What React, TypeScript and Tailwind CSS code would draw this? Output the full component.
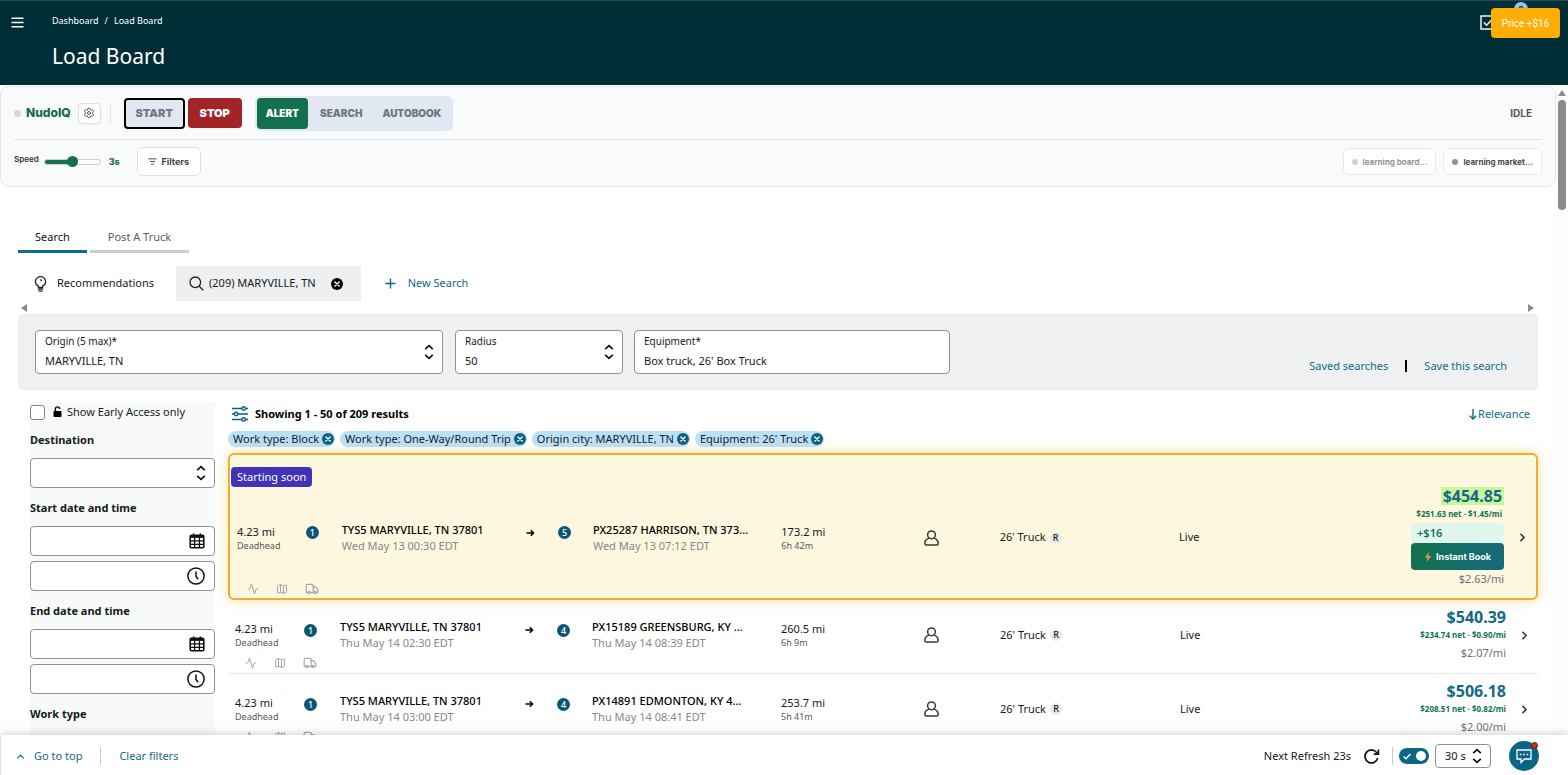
import type { ReactNode } from 'react';
import { Activity, ChevronRight, ChevronUp, ListFilter, Map as MapIcon, Settings, Truck } from 'lucide-react';

type Load = {
  id: string;
  fromStops: number;
  from: string;
  fromTime: string;
  toStops: number;
  to: string;
  toTime: string;
  miles: string;
  duration: string;
  price: string;
  net: string;
  rate: string;
  bump?: string;
};

const loads: Load[] = [
  { id: 'a', fromStops: 1, from: 'TYS5 MARYVILLE, TN 37801', fromTime: 'Wed May 13 00:30 EDT', toStops: 5, to: 'PX25287 HARRISON, TN 373…', toTime: 'Wed May 13 07:12 EDT', miles: '173.2 mi', duration: '6h 42m', price: '$454.85', net: '$251.63 net · $1.45/mi', rate: '$2.63/mi', bump: '+$16' },
  { id: 'b', fromStops: 1, from: 'TYS5 MARYVILLE, TN 37801', fromTime: 'Thu May 14 02:30 EDT', toStops: 4, to: 'PX15189 GREENSBURG, KY …', toTime: 'Thu May 14 08:39 EDT', miles: '260.5 mi', duration: '6h 9m', price: '$540.39', net: '$234.74 net · $0.90/mi', rate: '$2.07/mi' },
  { id: 'c', fromStops: 1, from: 'TYS5 MARYVILLE, TN 37801', fromTime: 'Thu May 14 03:00 EDT', toStops: 4, to: 'PX14891 EDMONTON, KY 4…', toTime: 'Thu May 14 08:41 EDT', miles: '253.7 mi', duration: '5h 41m', price: '$506.18', net: '$208.51 net · $0.82/mi', rate: '$2.00/mi' },
];

const filterChips = ['Work type: Block', 'Work type: One-Way/Round Trip', 'Origin city: MARYVILLE, TN', "Equipment: 26' Truck"];

function UpDown() {
  return (
    <svg className="pointer-events-none shrink-0" width="10" height="16" viewBox="0 0 10 16" fill="none" stroke="#111" strokeWidth="1.7" aria-hidden="true">
      <path d="M1.2 5.2 5 1.6l3.8 3.6M1.2 10.8 5 14.4l3.8-3.6" />
    </svg>
  );
}

function CloseDot({ size, color }: { size: number; color: string }) {
  return (
    <svg width={size} height={size} viewBox="0 0 12 12" aria-hidden="true">
      <circle cx="6" cy="6" r="6" fill={color} />
      <path d="m3.9 3.9 4.2 4.2M8.1 3.9 3.9 8.1" stroke="#fff" strokeWidth="1.4" strokeLinecap="round" />
    </svg>
  );
}

function CalendarIcon() {
  return (
    <svg width="16" height="16" viewBox="0 0 16 16" fill="none" stroke="#111" aria-hidden="true">
      <rect x="1.2" y="2.4" width="13.6" height="12.4" rx="1.2" strokeWidth="1.6" />
      <path d="M1 3.6h14" strokeWidth="2.6" />
      <path d="M1 7.8h14M1 11.4h14M5.6 5v9.6M10.4 5v9.6" strokeWidth="1.3" />
      <path d="M4.6.4v3M11.4.4v3" strokeWidth="1.5" />
    </svg>
  );
}

function ClockIcon() {
  return (
    <svg width="18" height="18" viewBox="0 0 18 18" fill="none" stroke="#111" strokeWidth="1.5" aria-hidden="true">
      <circle cx="9" cy="9" r="8.1" />
      <path d="M9 4.4v5l2.2 2.9" />
    </svg>
  );
}

function PersonIcon() {
  return (
    <svg width="15" height="16" viewBox="0 0 15 16" fill="none" stroke="#3a3a36" strokeWidth="1.5" aria-hidden="true">
      <circle cx="7.5" cy="4.8" r="3.9" />
      <path d="M4.9 8.1C2.3 9 .8 11 .8 13.6c0 1 .6 1.5 1.6 1.5h10.2c1 0 1.6-.5 1.6-1.5 0-2.6-1.5-4.6-4.1-5.5" />
    </svg>
  );
}

function StopBadge({ count }: { count: number }) {
  return (
    <span className="flex size-[13px] items-center justify-center rounded-full bg-[#0b5672] text-[9px] leading-none font-medium text-white">
      {count}
    </span>
  );
}

function ComboField({ id, label, value, className }: { id: string; label: string; value: string; className: string }) {
  return (
    <div className={`flex h-11 items-center rounded-sm border border-[#8d9296] bg-white pr-2 pl-[9px] ${className}`}>
      <div className="flex min-w-0 flex-1 flex-col pb-[3px]">
        <label htmlFor={id} className="text-[10px] leading-5">{label}</label>
        <select id={id} className="h-5 w-full appearance-none bg-transparent text-[11px] leading-5 outline-none">
          <option>{value}</option>
        </select>
      </div>
      <UpDown />
    </div>
  );
}

function SideInput({ label, icon }: { label: string; icon: ReactNode }) {
  return (
    <div className="flex h-[30px] items-center rounded-sm border border-[#8d9296] bg-white pr-[9px] pl-2">
      <input aria-label={label} className="min-w-0 flex-1 bg-transparent text-[11px] outline-none" />
      {icon}
    </div>
  );
}

function LoadRow({ load }: { load: Load }) {
  const hot = Boolean(load.bump);
  return (
    <li
      className={
        hot
          ? 'relative rounded-md border-2 border-[#ebb12c] bg-[#fdf7df] pt-3 pb-[3px] shadow-[0_0_12px_rgba(250,176,30,0.45)]'
          : 'border-b border-[#e8eaeb] pt-2 pb-1'
      }
    >
      {hot && (
        <span className="ml-px flex h-5 w-fit items-center rounded-sm bg-[#4133b7] px-[6px] text-[11px] text-white">Starting soon</span>
      )}
      <div className="grid grid-cols-[minmax(0,69fr)_minmax(0,36fr)_minmax(0,185fr)_minmax(0,32fr)_minmax(0,35fr)_minmax(0,189fr)_minmax(0,143fr)_minmax(0,76fr)_minmax(0,180fr)_minmax(0,326fr)_minmax(0,25fr)] items-center pr-[7px] pl-[7px]">
        <div>
          <p className="text-[11px] leading-4">4.23 mi</p>
          <p className="text-[9px] leading-3 text-[#55595c]">Deadhead</p>
        </div>
        <div className="pb-[10px]"><StopBadge count={load.fromStops} /></div>
        <div>
          <p className="truncate text-[11px] leading-4 font-medium text-black">{load.from}</p>
          <p className="truncate text-[11px] leading-4 text-[#85888b]">{load.fromTime}</p>
        </div>
        <svg className="mb-[10px]" width="9" height="8" viewBox="0 0 9 8" fill="none" stroke="#000" strokeWidth="1.5" aria-hidden="true">
          <path d="M.5 4h7M4.8 1.2 7.6 4 4.8 6.8" />
        </svg>
        <div className="pb-[10px]"><StopBadge count={load.toStops} /></div>
        <div>
          <p className="truncate text-[11px] leading-4 font-medium text-black">{load.to}</p>
          <p className="truncate text-[11px] leading-4 text-[#85888b]">{load.toTime}</p>
        </div>
        <div>
          <p className="text-[11px] leading-4">{load.miles}</p>
          <p className="text-[9px] leading-3 text-[#55595c]">{load.duration}</p>
        </div>
        <PersonIcon />
        <div className="flex items-center gap-1 text-[11px]">
          26' Truck
          <span className="flex size-3 items-center justify-center rounded-full bg-[#e7e9ea] text-[9px] font-medium">R</span>
        </div>
        <div className="flex items-center justify-between">
          <span className="text-[11px]">Live</span>
          <div className="flex flex-col items-end">
            <span className={`h-[18px] text-[16px] leading-[18px] font-bold text-[#116a85] ${hot ? 'bg-[#c9f59c] px-[2px]' : ''}`}>{load.price}</span>
            <span className={`text-[8px] leading-[18px] font-bold text-[#12724f] ${hot ? 'pr-[2px]' : ''}`}>{load.net}</span>
            {hot && (
              <div className="flex w-[93px] flex-col">
                <span className="h-5 rounded-t-sm bg-[#e1f6ed] pl-[6px] text-[11px] leading-5 font-semibold text-[#12724f]">{load.bump}</span>
                <button type="button" className="flex h-[27px] items-center justify-center gap-1 rounded bg-linear-to-r from-[#13704f] to-[#176a7d] font-[Inter,sans-serif] text-[9px] font-bold text-white">
                  <svg width="8" height="10" viewBox="0 0 8 10" aria-hidden="true">
                    <path d="M5 0 1 5.6h2.4L2.6 10 7.2 4.2H4.4z" fill="#f59a3c" />
                  </svg>
                  Instant Book
                </button>
              </div>
            )}
            <span className="text-[11px] leading-[18px] text-[#6c7073]">{load.rate}</span>
          </div>
        </div>
        <button type="button" aria-label="Load details" className="flex justify-end">
          <ChevronRight size={13} strokeWidth={3} color="#333" />
        </button>
      </div>
      <div className="-mt-[5px] flex h-3 items-center gap-[17px] pl-[17px] text-[#a3a6a6]">
        <Activity size={12} />
        <MapIcon size={12} />
        <Truck size={14} />
      </div>
    </li>
  );
}

function Header() {
  return (
    <header className="relative flex h-[85px] shrink-0 items-start border-t border-[#2d4c52] bg-[#002e36] text-white">
      <button type="button" aria-label="Menu" className="mt-4 ml-[11px]">
        <svg width="13" height="11" viewBox="0 0 13 11" stroke="#fff" strokeWidth="1.5" aria-hidden="true">
          <path d="M.5 1.2h12M.5 5.4h12M.5 9.8h12" />
        </svg>
      </button>
      <div className="ml-7 pt-3">
        <nav aria-label="Breadcrumb" className="flex gap-[6px] text-[9px] leading-4">
          <a href="#dashboard">Dashboard</a>
          <span>/</span>
          <a href="#load-board">Load Board</a>
        </nav>
        <h1 className="mt-[11px] text-[21px] leading-8">Load Board</h1>
      </div>
      <svg className="mt-[14px] mr-[73px] ml-auto" width="15" height="15" viewBox="0 0 15 15" fill="none" stroke="#fff" strokeWidth="1.4" aria-hidden="true">
        <rect x="1" y="1" width="13" height="13" />
        <path d="m4 7.4 2.6 2.8L12 4.4" />
      </svg>
      <span className="absolute top-px right-10 size-[14px] rounded-full bg-[#8fc3ec] text-center text-[9px] leading-[14px] font-bold text-[#0b3a52]">0</span>
      <div role="status" className="absolute top-[7px] right-2 flex h-[30px] w-[69px] items-center justify-center rounded bg-[#ffad00] font-[Roboto,sans-serif] text-[10px] text-white">
        Price +$16
      </div>
    </header>
  );
}

function NudoPanel() {
  return (
    <section aria-label="NudoIQ controls" className="mt-px rounded-lg border border-[#e3e8ee] bg-[#f9fafc] px-[13px] font-[Inter,sans-serif]">
      <div className="flex h-[53px] items-center border-b border-[#dfe4e8]">
        <span className="size-[7px] rounded-full bg-[#d5d7d9]" />
        <strong className="ml-[5px] text-[12px] font-extrabold text-[#136b4d]">NudoIQ</strong>
        <button type="button" aria-label="Settings" className="ml-[7px] flex h-[21px] w-[23px] items-center justify-center rounded border border-[#dcdfe3] bg-white text-[#55595c] shadow-xs">
          <Settings size={12} strokeWidth={2} />
        </button>
        <span className="ml-[9px] h-5 w-px bg-[#dde1e6]" />
        <button type="button" className="ml-[13px] h-[31px] w-[61px] rounded border-2 border-black bg-[#e2e7f1] text-[11px] font-black text-[#737a87]">START</button>
        <button type="button" className="ml-[3px] h-[30px] w-[54px] rounded bg-[#a12527] text-[11px] font-black text-white shadow-xs">STOP</button>
        <div className="ml-[13px] flex items-center rounded-md bg-[#e2e8f2] p-[2px] pr-3 text-[10px] font-black text-[#6f7784]">
          <button type="button" className="h-[31px] rounded bg-[#12704f] px-[9px] text-white">ALERT</button>
          <button type="button" className="ml-3">SEARCH</button>
          <button type="button" className="ml-5">AUTOBOOK</button>
        </div>
        <span className="mr-[10px] ml-auto text-[10px] font-bold text-[#55595c]">IDLE</span>
      </div>
      <div className="flex h-[46px] items-center pb-[3px]">
        <label htmlFor="speed" className="mb-[6px] text-[8px] font-semibold text-[#333]">Speed</label>
        <input
          id="speed"
          type="range"
          defaultValue={50}
          className="ml-[5px] h-[6px] w-[57px] appearance-none rounded-full border border-[#c9ccd0] bg-linear-to-r from-[#12704f] from-50% to-white to-50% [&::-webkit-slider-thumb]:size-[11px] [&::-webkit-slider-thumb]:appearance-none [&::-webkit-slider-thumb]:rounded-full [&::-webkit-slider-thumb]:bg-[#12704f]"
        />
        <output htmlFor="speed" className="ml-2 text-[9px] font-extrabold text-[#136b4d]">3s</output>
        <button type="button" className="ml-[17px] flex h-[29px] w-16 items-center justify-center gap-1 rounded-md border border-[#dcdfe3] bg-white text-[9px] font-bold text-[#3e4347]">
          <ListFilter size={9} strokeWidth={2.4} />
          Filters
        </button>
        <div className="ml-auto flex gap-[7px] text-[8px] font-bold">
          <span className="flex h-[27px] items-center gap-[5px] rounded-md border border-[#e6e9ed] bg-white px-2 text-[#8e939b]">
            <span className="size-[6px] rounded-full bg-[#cdd0d4]" />
            learning board…
          </span>
          <span className="flex h-[27px] items-center gap-[5px] rounded-md border border-[#e6e9ed] bg-white px-2 text-[#44484f]">
            <span className="size-[6px] rounded-full bg-[#8e929b]" />
            learning market…
          </span>
        </div>
      </div>
    </section>
  );
}

function SearchTabs() {
  return (
    <>
      <nav aria-label="Board" className="mt-[33px] ml-[18px] flex gap-[3px] text-[11px]">
        <a href="#search" className="flex h-[33px] w-[69px] items-center justify-center border-b-3 border-[#0b6f8e] pt-1 text-[#111]">Search</a>
        <a href="#post" className="flex h-[33px] w-[99px] items-center justify-center border-b-3 border-[#cbced0] pt-1 text-[#5a5e61]">Post A Truck</a>
      </nav>
      <div className="mt-[13px] ml-[18px] flex h-[35px] items-center text-[11px]">
        <button type="button" className="flex items-center gap-[10px] pr-[22px] pl-4">
          <svg width="13" height="16" viewBox="0 0 13 16" fill="none" stroke="#222" strokeWidth="1.3" aria-hidden="true">
            <path d="M4.3 11.4V9.9C2.6 9.1 1.4 7.6 1.4 5.7a5.1 5.1 0 0 1 10.2 0c0 1.9-1.2 3.4-2.9 4.2v1.5z" />
            <path d="M3.9 13h5.2M4.5 15.2h4M6.5 3.4l1 1.7" />
          </svg>
          Recommendations
        </button>
        <div className="flex h-full items-center bg-[#eeeff1] pr-[18px] pl-[13px]">
          <svg width="15" height="15" viewBox="0 0 15 15" fill="none" stroke="#222" strokeWidth="1.3" aria-hidden="true">
            <circle cx="6.3" cy="6.3" r="5.3" />
            <path d="m10.2 10.2 4 4" />
          </svg>
          <button type="button" className="ml-[5px]">(209) MARYVILLE, TN</button>
          <button type="button" aria-label="Close search" className="ml-[15px]"><CloseDot size={12} color="#000" /></button>
        </div>
        <button type="button" className="ml-6 flex items-center gap-3 text-[#116a85]">
          <svg width="11" height="11" viewBox="0 0 11 11" stroke="#116a85" strokeWidth="1.4" aria-hidden="true"><path d="M5.5.5v10M.5 5.5h10" /></svg>
          New Search
        </button>
      </div>
      <div className="mr-[22px] ml-[21px] flex h-[13px] items-center justify-between">
        <svg width="6" height="8" viewBox="0 0 6 8" aria-hidden="true"><path d="M6 0v8L0 4z" fill="#8a8a8a" /></svg>
        <svg width="6" height="8" viewBox="0 0 6 8" aria-hidden="true"><path d="M0 0v8l6-4z" fill="#8a8a8a" /></svg>
      </div>
      <form className="mr-[18px] ml-[18px] flex h-[76px] rounded-sm bg-[#eff0f2] px-[17px] pt-4">
        <ComboField id="origin" label="Origin (5 max)*" value="MARYVILLE, TN" className="w-[408px]" />
        <ComboField id="radius" label="Radius" value="50" className="ml-3 w-[168px]" />
        <div className="ml-[11px] flex h-11 w-[316px] flex-col rounded-sm border border-[#8d9296] bg-white px-[9px]">
          <label htmlFor="equipment" className="text-[10px] leading-5">Equipment*</label>
          <input id="equipment" defaultValue="Box truck, 26' Box Truck" className="h-5 bg-transparent text-[11px] leading-5 outline-none" />
        </div>
        <div className="mt-7 mr-[14px] ml-auto flex h-4 items-center text-[11px] text-[#116a85]">
          <a href="#saved">Saved searches</a>
          <span className="mx-[17px] h-3 w-[2px] bg-black" />
          <a href="#save">Save this search</a>
        </div>
      </form>
    </>
  );
}

function Sidebar() {
  return (
    <aside className="flex w-[185px] shrink-0 flex-col bg-[#f8fafa] text-[11px]">
      <label className="flex h-5 items-center">
        <input type="checkbox" className="size-[15px] appearance-none rounded-[3px] border border-[#7f8487] bg-white" />
        <svg className="ml-2" width="9" height="12" viewBox="0 0 9 12" aria-hidden="true">
          <rect x=".5" y="5" width="8" height="6" rx=".8" fill="#000" />
          <path d="M2.4 5V3a2.1 2.1 0 0 1 4.2 0" fill="none" stroke="#000" strokeWidth="1.4" />
        </svg>
        <span className="ml-[5px]">Show Early Access only</span>
      </label>
      <h2 className="mt-2 mb-2 leading-5 font-bold">Destination</h2>
      <div className="flex h-[30px] items-center rounded-sm border border-[#8d9296] bg-white pr-2 pl-2">
        <select aria-label="Destination" className="min-w-0 flex-1 appearance-none bg-transparent outline-none" />
        <UpDown />
      </div>
      <h2 className="mt-[10px] mb-2 leading-5 font-bold">Start date and time</h2>
      <div className="flex flex-col gap-[5px]">
        <SideInput label="Start date" icon={<CalendarIcon />} />
        <SideInput label="Start time" icon={<ClockIcon />} />
      </div>
      <h2 className="mt-[10px] mb-2 leading-5 font-bold">End date and time</h2>
      <div className="flex flex-col gap-[5px]">
        <SideInput label="End date" icon={<CalendarIcon />} />
        <SideInput label="End time" icon={<ClockIcon />} />
      </div>
      <h2 className="mt-[10px] mb-2 leading-5 font-bold">Work type</h2>
    </aside>
  );
}

function Results() {
  return (
    <section className="ml-[13px] min-w-0 flex-1">
      <div className="flex h-6 items-center pr-2 pl-1 text-[11px]">
        <svg width="16" height="16" viewBox="0 0 16 16" fill="none" stroke="#0f5f78" strokeWidth="1.4" aria-hidden="true">
          <path d="M0 2.5h10M13.5 2.5H16M0 8h2.5M6 8h10M0 13.5h10M13.5 13.5H16" />
          <circle cx="11.7" cy="2.5" r="1.7" />
          <circle cx="4.2" cy="8" r="1.7" />
          <circle cx="11.7" cy="13.5" r="1.7" />
        </svg>
        <h2 className="ml-[7px] font-bold text-black">Showing 1 - 50 of 209 results</h2>
        <button type="button" className="ml-auto flex items-center gap-px text-[#116a85]">
          <svg width="8" height="11" viewBox="0 0 8 11" fill="none" stroke="#116a85" strokeWidth="1.4" aria-hidden="true"><path d="M4 0v10M.7 6.7 4 10l3.3-3.3" /></svg>
          Relevance
        </button>
      </div>
      <ul className="mt-[5px] flex gap-[5px]">
        {filterChips.map((chip) => (
          <li key={chip} className="flex h-4 items-center gap-[3px] rounded-full bg-[#bbe1f8] pr-px pl-[5px] text-[11px] whitespace-nowrap text-[#12222b]">
            {chip}
            <button type="button" aria-label={`Remove ${chip}`}><CloseDot size={12} color="#0d6280" /></button>
          </li>
        ))}
      </ul>
      <ul className="mt-[6px]">
        {loads.map((load) => (
          <LoadRow key={load.id} load={load} />
        ))}
      </ul>
    </section>
  );
}

function Footer() {
  return (
    <footer className="relative flex h-10 shrink-0 items-center border-l border-[#e1e3e4] bg-white pt-[2px] pr-[29px] pl-[14px] text-[11px] shadow-[0_-2px_8px_rgba(0,0,0,0.16)]">
      <button type="button" className="flex items-center gap-2 text-[#116a85]">
        <ChevronUp size={11} strokeWidth={3} />
        Go to top
      </button>
      <span className="mx-[18px] h-[18px] w-px bg-[#c8cbcd]" />
      <button type="button" className="text-[#116a85]">Clear filters</button>
      <span className="ml-auto">Next Refresh 23s</span>
      <button type="button" aria-label="Refresh now" className="ml-3">
        <svg width="17" height="17" viewBox="0 0 17 17" fill="none" stroke="#111" strokeWidth="1.7" aria-hidden="true">
          <path d="M14.7 10.3a6.5 6.5 0 1 1-1.3-6.1l1.5 1.7" />
          <path d="M15.4 1.5v4.7h-4.7" />
        </svg>
      </button>
      <span className="ml-3 h-[18px] w-px bg-[#c8cbcd]" />
      <button type="button" role="switch" aria-checked="true" aria-label="Auto refresh" className="ml-[6px] flex h-4 w-[30px] items-center justify-between rounded-full bg-[#0b6685] pr-[3px] pl-1">
        <svg width="8" height="7" viewBox="0 0 8 7" fill="none" stroke="#fff" strokeWidth="1.4" aria-hidden="true"><path d="M.6 3.4 3 5.8 7.4 1" /></svg>
        <span className="size-[10px] rounded-full bg-white" />
      </button>
      <div className="ml-[6px] flex h-6 w-14 items-center rounded-sm border border-[#8d9296] pr-2 pl-[9px]">
        <select aria-label="Refresh interval" className="min-w-0 flex-1 appearance-none bg-transparent outline-none">
          <option>30 s</option>
        </select>
        <UpDown />
      </div>
      <button type="button" aria-label="Chat" className="relative ml-[18px] flex size-[30px] items-center justify-center rounded-full bg-[#0b6685]">
        <svg width="16" height="15" viewBox="0 0 16 15" fill="none" stroke="#fff" strokeWidth="1.3" aria-hidden="true">
          <path d="M1 1h14v9H8.5L5 13.4V10H1z" />
          <path d="M3.8 5.5h1.6M7.2 5.5h1.6M10.6 5.5h1.6" strokeWidth="1.6" />
        </svg>
        <span className="absolute top-px right-px size-[7px] rounded-full border border-[#57262c] bg-[#d9231d]" />
      </button>
    </footer>
  );
}

export default function App() {
  return (
    <div className="flex h-screen flex-col overflow-hidden bg-white font-['Noto_Sans',sans-serif] text-[#16191b]">
      <Header />
      <div className="flex min-h-0 flex-1">
        <main className="min-w-0 flex-1 overflow-hidden">
          <NudoPanel />
          <SearchTabs />
          <div className="mt-3 mr-[18px] ml-[30px] flex">
            <Sidebar />
            <Results />
          </div>
        </main>
        <div aria-hidden="true" className="flex w-3 shrink-0 flex-col items-center gap-1 bg-[#fdfdfd] pt-[5px]">
          <svg width="8" height="6" viewBox="0 0 8 6"><path d="M4 0 8 6H0z" fill="#8a8a8a" /></svg>
          <span className="h-[110px] w-2 rounded-full bg-[#8b8b8b]" />
        </div>
      </div>
      <Footer />
    </div>
  );
}
